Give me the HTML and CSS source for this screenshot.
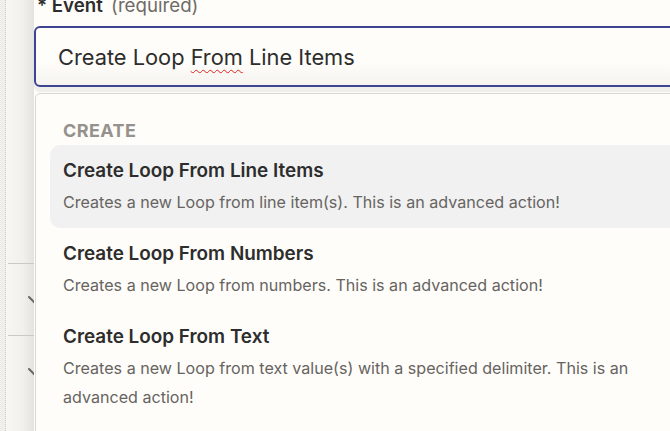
FILE: index.html
```html
<!DOCTYPE html>
<html lang="en">
<head>
  <meta charset="UTF-8">
  <meta name="viewport" content="width=device-width, initial-scale=1.0">
  <title>Event</title>
  <link rel="stylesheet" href="styles.css">
</head>
<body>
  <div class="screen">
    <div class="rail"></div>

    <div class="side">
      <div class="section">
        <svg class="chevron" width="16" height="16" viewBox="0 0 16 16"><path d="M2 5l6 6 6-6" fill="none" stroke="#6b6966" stroke-width="2" stroke-linecap="round"/></svg>
      </div>
      <div class="section">
        <svg class="chevron" width="16" height="16" viewBox="0 0 16 16"><path d="M2 5l6 6 6-6" fill="none" stroke="#6b6966" stroke-width="2" stroke-linecap="round"/></svg>
      </div>
    </div>

    <main class="field">
      <div class="label"><span class="req">* Event</span> <span class="hint">(required)</span></div>

      <div class="input"><span>Create Loop <span class="typo">From</span> Line Items</span></div>

      <div class="menu">
        <div class="group">CREATE</div>

        <div class="option active">
          <div class="title">Create Loop From Line Items</div>
          <div class="desc">Creates a new Loop from line item(s). This is an advanced action!</div>
        </div>

        <div class="option">
          <div class="title">Create Loop From Numbers</div>
          <div class="desc">Creates a new Loop from numbers. This is an advanced action!</div>
        </div>

        <div class="option">
          <div class="title">Create Loop From Text</div>
          <div class="desc">Creates a new Loop from text value(s) with a specified delimiter. This is an advanced action!</div>
        </div>
      </div>
    </main>
  </div>
</body>
</html>
```

FILE: styles.css
```css
body {
  margin: 0;
  padding: 0;
  overflow: hidden;
  background-color: #fffdf9;
  font-family: Inter, "Noto Sans", sans-serif;
  color: #2d2d2d;
}

.screen {
  display: flex;
  height: 431px;
  overflow: hidden;
}

/* dotted guide on the far left */
.rail {
  flex: 0 0 5px;
  background-color: #efeeeb;
  border-right: 1px dotted #cfcdc9;
}

/* collapsed form sections peeking out behind the menu */
.side {
  flex: 0 0 28px;
  padding-top: 263px;
  overflow: hidden;
  background: linear-gradient(to right, #f7f6f3, #f1f0ed 60%, #e4e3e0);
}

.section {
  margin-left: 2px;
  height: 71px;
  border-top: 1px solid #cbc9c5;
  display: flex;
  align-items: center;
}

.chevron {
  flex: 0 0 16px;
  margin-left: 19px;
}

.field {
  flex: 0 0 760px;
  display: flex;
  flex-direction: column;
}

.label {
  margin-top: -5px;
  padding-left: 3px;
  font-size: 18.7px;
  line-height: 21px;
}

.req {
  font-weight: 600;
  color: #2d2d2d;
}

.hint {
  color: #6e6b67;
  margin-left: 3px;
}

.input {
  flex: none;
  margin-top: 10px;
  height: 57px;
  border: 2px solid #3d4593;
  border-radius: 6px;
  padding-left: 22px;
  display: flex;
  align-items: center;
  font-size: 21.8px;
  color: #2d2d2d;
  background: linear-gradient(to bottom, #fffdf9 60%, #f4f3f0);
  box-shadow: 0 5px 0 #efeeeb;
}

.typo {
  text-decoration: underline wavy #e0201c 1px;
  text-underline-offset: 4px;
}

/* the list runs on past the bottom of the window */
.menu {
  flex: none;
  height: 400px;
  margin-top: 6px;
  margin-left: 1px;
  border: 1px solid #d9d7d3;
  border-radius: 5px;
  background-color: #fffdf9;
  padding: 27px 93px 0 14px;
}

.group {
  margin-left: 13px;
  margin-bottom: 4px;
  font-size: 18px;
  line-height: 20px;
  font-weight: 700;
  letter-spacing: 0.4px;
  color: #95928d;
}

.option {
  padding: 14px 13px 11px;
  border-radius: 10px;
}

.option.active {
  background-color: #f1f1f1;
}

.title {
  font-size: 18.9px;
  line-height: 24px;
  font-weight: 600;
  color: #2d2d2d;
  margin-bottom: 5px;
}

.desc {
  font-size: 16.1px;
  line-height: 29px;
  color: #666461;
}
```
